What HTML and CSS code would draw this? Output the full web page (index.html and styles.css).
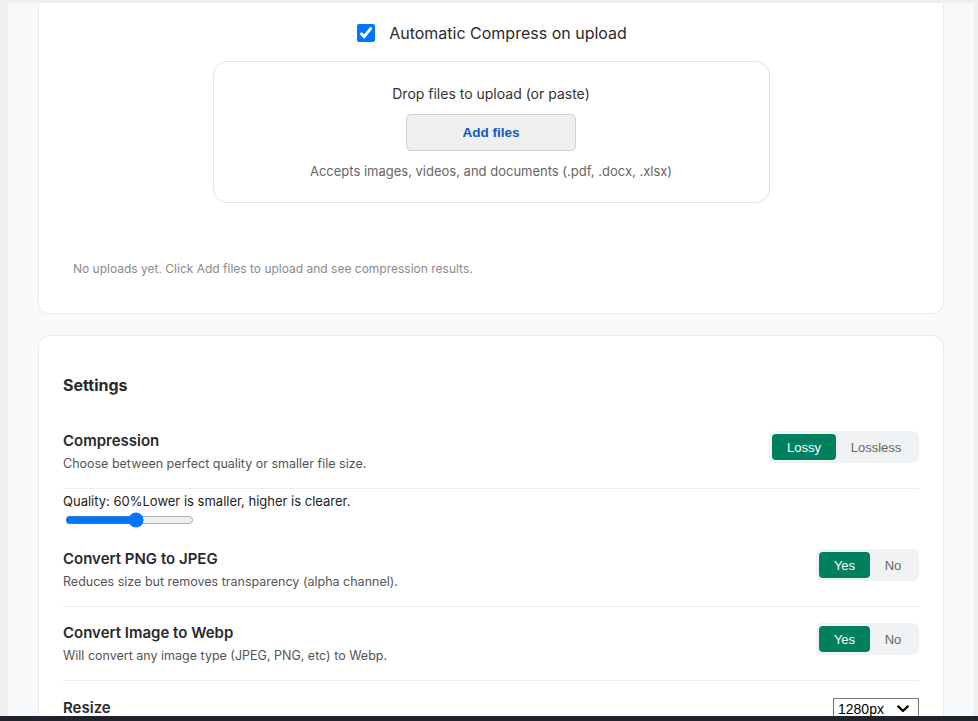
FILE: index.html
```html
<!DOCTYPE html>
<html lang="en">
<head>
<meta charset="utf-8">
<title>Compress</title>
<link rel="stylesheet" href="styles.css">
</head>
<body>
<div class="screen">
  <div class="viewport">
    <section class="card card-upload">
      <label class="auto-row">
        <input type="checkbox" class="auto-check" checked>
        <span class="auto-label">Automatic Compress on upload</span>
      </label>
      <div class="dropzone">
        <p class="drop-title">Drop files to upload (or paste)</p>
        <button class="add-btn" type="button">Add files</button>
        <p class="drop-hint">Accepts images, videos, and documents (.pdf, .docx, .xlsx)</p>
      </div>
      <p class="empty-note">No uploads yet. Click Add files to upload and see compression results.</p>
    </section>

    <section class="card card-settings">
      <h2 class="settings-title">Settings</h2>

      <div class="setting-row">
        <div class="setting-text">
          <div class="setting-name">Compression</div>
          <div class="setting-desc">Choose between perfect quality or smaller file size.</div>
        </div>
        <div class="segmented">
          <button class="seg-btn active seg-lossy" type="button">Lossy</button>
          <button class="seg-btn seg-lossless" type="button">Lossless</button>
        </div>
      </div>

      <div class="quality">
        <div class="quality-label">Quality: 60%<span>Lower is smaller, higher is clearer.</span></div>
        <input class="quality-range" type="range" min="10" max="100" value="60">
      </div>

      <div class="setting-row">
        <div class="setting-text">
          <div class="setting-name">Convert PNG to JPEG</div>
          <div class="setting-desc">Reduces size but removes transparency (alpha channel).</div>
        </div>
        <div class="segmented">
          <button class="seg-btn active seg-yes" type="button">Yes</button>
          <button class="seg-btn seg-no" type="button">No</button>
        </div>
      </div>

      <div class="setting-row">
        <div class="setting-text">
          <div class="setting-name">Convert Image to Webp</div>
          <div class="setting-desc">Will convert any image type (JPEG, PNG, etc) to Webp.</div>
        </div>
        <div class="segmented">
          <button class="seg-btn active seg-yes" type="button">Yes</button>
          <button class="seg-btn seg-no" type="button">No</button>
        </div>
      </div>

      <div class="setting-row last">
        <div class="setting-text">
          <div class="setting-name">Resize</div>
        </div>
        <span class="select-wrap">
          <select class="resize-select">
            <option>1280px</option>
            <option>1920px</option>
            <option>1024px</option>
          </select>
          <svg class="select-arrow" width="12" height="8" viewBox="0 0 12 8" aria-hidden="true">
            <path d="M1.2 1.4 L6 6 L10.8 1.4" fill="none" stroke="#000" stroke-width="2.2" stroke-linecap="round" stroke-linejoin="round"/>
          </svg>
        </span>
      </div>
    </section>
  </div>
</div>
<div class="taskbar"></div>
</body>
</html>
```
FILE: styles.css
```css
* { box-sizing: border-box; }

html, body {
  margin: 0;
  padding: 0;
  height: 721px;
  overflow: hidden;
}

body {
  background: #efefef;
  font-family: Inter, "Noto Sans", "Liberation Sans", sans-serif;
  color: #2a2a2a;
}

.screen {
  height: 716px;
  padding: 3px 4px 0 8px;
}

.viewport {
  height: 713px;
  overflow: hidden;
  background: #f8f9fa;
  padding: 0 30px 0 30px;
}

.card {
  background: #fff;
  border: 1px solid #e9ebee;
  border-radius: 12px;
}

.card-upload {
  border-top: none;
  border-top-left-radius: 0;
  border-top-right-radius: 0;
  padding: 18px 34px 36px 34px;
}

.auto-row {
  display: flex;
  justify-content: center;
  align-items: center;
  gap: 14px;
  height: 24px;
  margin-left: 2px;
}

.auto-check {
  width: 18px;
  height: 18px;
  margin: 0;
  accent-color: #0075ff;
}

.auto-label {
  font-size: 16px;
  color: #2b2b2b;
}

.dropzone {
  width: 557px;
  margin: 16px auto 0;
  border: 1px solid #e2e2e2;
  border-radius: 14px;
  padding: 22px 0 21px;
  display: flex;
  flex-direction: column;
  align-items: center;
}

.drop-title {
  margin: 0;
  font-size: 14px;
  line-height: 20px;
  color: #333;
}

.add-btn {
  margin-top: 10px;
  width: 170px;
  height: 37px;
  background: #efefef;
  border: 1px solid #cfcfcf;
  border-radius: 5px;
  font-family: "Liberation Sans", Arial, sans-serif;
  font-weight: bold;
  font-size: 13.5px;
  color: #0b5cc2;
}

.drop-hint {
  margin: 10px 0 0;
  font-size: 13px;
  line-height: 20px;
  color: #666;
}

.empty-note {
  margin: 58px 0 0;
  font-size: 12px;
  line-height: 16px;
  color: #8a8a8a;
}

.card-settings {
  margin-top: 21px;
  padding: 38px 24px 24px 24px;
  border-bottom-left-radius: 0;
  border-bottom-right-radius: 0;
}

.settings-title {
  margin: 0;
  font-size: 16px;
  line-height: 22px;
  font-weight: 700;
  color: #2a2a2a;
}

.setting-row {
  display: flex;
  justify-content: space-between;
  align-items: flex-start;
  padding: 16px 0 15px;
  border-bottom: 1px solid #ececec;
}

.card-settings .settings-title + .setting-row {
  padding-top: 35px;
}

.setting-row.last {
  border-bottom: none;
  padding-top: 17px;
}

.setting-name {
  font-size: 15px;
  line-height: 20px;
  font-weight: 600;
  color: #2a2a2a;
}

.setting-desc {
  margin-top: 4px;
  font-size: 12.5px;
  line-height: 18px;
  color: #555;
}

.segmented {
  display: flex;
  padding: 3px;
  background: #f1f2f4;
  border-radius: 6px;
}

.seg-btn {
  height: 26px;
  padding: 0;
  border: none;
  border-radius: 4px;
  background: transparent;
  font-family: "Liberation Sans", Arial, sans-serif;
  font-size: 13px;
  color: #666;
}

.seg-btn.active {
  background: #00805f;
  color: #fff;
}

.seg-lossy { width: 64px; }
.seg-lossless { width: 80px; }
.seg-yes { width: 51px; }
.seg-no { width: 46px; }

.quality {
  padding: 3px 0 5px;
}

.quality-label {
  font-size: 13px;
  line-height: 18px;
  color: #222;
}

.quality-range {
  display: block;
  width: 129px;
  height: 16px;
  margin: 2px 0 0 2px;
  accent-color: #0075ff;
}

.select-wrap {
  position: relative;
  display: block;
}

.resize-select {
  display: block;
  width: 86px;
  height: 22px;
  font-family: "Liberation Sans", Arial, sans-serif;
  font-size: 14px;
  color: #000;
  background: #fff;
  border: 1px solid #767676;
  border-radius: 0;
  padding: 0 0 0 4px;
  appearance: none;
  -webkit-appearance: none;
}

.select-arrow {
  position: absolute;
  right: 10px;
  top: 7px;
  pointer-events: none;
}

.taskbar {
  height: 5px;
  background: #1f232c;
}
```
